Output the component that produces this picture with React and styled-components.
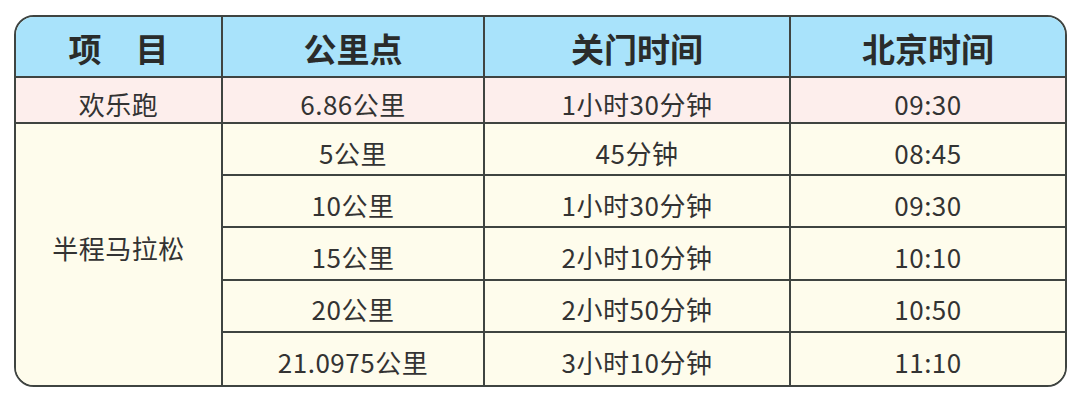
import React from "react";
import styled, { createGlobalStyle } from "styled-components";

const GlobalStyle = createGlobalStyle`
  html, body {
    margin: 0;
    padding: 0;
    background: #ffffff;
  }
`;

const Page = styled.div`
  padding: 15px 0 0 14px;
  font-family: "Noto Sans CJK SC", "Noto Sans", sans-serif;
`;

const Table = styled.div`
  display: grid;
  grid-template-columns: 207px 262px 306px 1fr;
  grid-template-rows: 61px 46px repeat(5, 1fr);
  width: 1053px;
  height: 372px;
  box-sizing: border-box;
  border: 2px solid #3f4441;
  border-radius: 20px;
  overflow: hidden;
  background: #fefcec;
`;

const bg = {
  head: "#a9e3fb",
  pink: "#fdeeec",
  cream: "#fefcec",
};

const Cell = styled.div`
  display: flex;
  align-items: center;
  justify-content: center;
  background: ${(p) => bg[p.tone || "cream"]};
  border-right: ${(p) => (p.last ? "none" : "2px solid #3f4441")};
  border-bottom: ${(p) => (p.bottom ? "none" : "2px solid #3f4441")};
  color: #333333;
  font-size: 26px;
  padding-top: ${(p) => (p.span ? "0" : "6px")};
  padding-bottom: ${(p) => (p.span ? "14px" : "0")};
  grid-row: ${(p) => (p.span ? `span ${p.span}` : "auto")};
  letter-spacing: 0.5px;
`;

const HeadCell = styled(Cell)`
  font-size: 33px;
  font-weight: 700;
  color: #2a2c2b;
  padding-top: 2px;
  letter-spacing: 0;
`;

const Gap = styled.span`
  display: inline-block;
  width: 34px;
`;

const rows = [
  ["5公里", "45分钟", "08:45"],
  ["10公里", "1小时30分钟", "09:30"],
  ["15公里", "2小时10分钟", "10:10"],
  ["20公里", "2小时50分钟", "10:50"],
  ["21.0975公里", "3小时10分钟", "11:10"],
];

export default function App() {
  return (
    <Page>
      <GlobalStyle />
      <Table>
        <HeadCell tone="head">
          项<Gap />目
        </HeadCell>
        <HeadCell tone="head">公里点</HeadCell>
        <HeadCell tone="head">关门时间</HeadCell>
        <HeadCell tone="head" last>
          北京时间
        </HeadCell>

        <Cell tone="pink">欢乐跑</Cell>
        <Cell tone="pink">6.86公里</Cell>
        <Cell tone="pink">1小时30分钟</Cell>
        <Cell tone="pink" last>
          09:30
        </Cell>

        <Cell span={5} bottom>
          半程马拉松
        </Cell>
        {rows.map((r, i) => {
          const isLast = i === rows.length - 1;
          return (
            <React.Fragment key={r[0]}>
              <Cell bottom={isLast}>{r[0]}</Cell>
              <Cell bottom={isLast}>{r[1]}</Cell>
              <Cell bottom={isLast} last>
                {r[2]}
              </Cell>
            </React.Fragment>
          );
        })}
      </Table>
    </Page>
  );
}
